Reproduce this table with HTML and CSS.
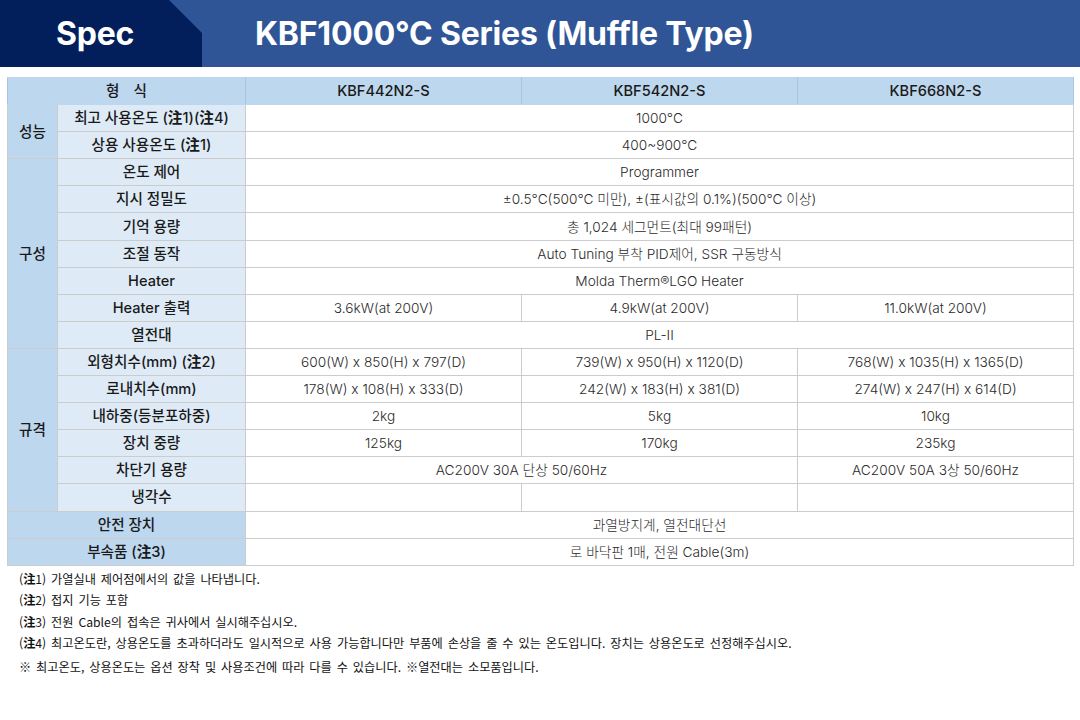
FILE: index.html
```html
<!DOCTYPE html>
<html lang="ko">
<head>
<meta charset="utf-8">
<link rel="stylesheet" href="styles.css">
</head>
<body>
<header class="topbar">
  <div class="tab"><span class="tab-text">Spec</span></div>
  <h1 class="title">KBF1000°C Series (Muffle Type)</h1>
</header>
<main class="content">
  <table class="spec">
    <colgroup>
      <col class="c-group"><col class="c-label"><col class="c-data"><col class="c-data"><col class="c-data">
    </colgroup>
    <tr class="head">
      <th colspan="2" class="h"><span class="spaced">형식</span></th>
      <th class="h">KBF442N2-S</th>
      <th class="h">KBF542N2-S</th>
      <th class="h">KBF668N2-S</th>
    </tr>
    <tr>
      <th rowspan="2" class="grp">성능</th>
      <th class="lbl">최고 사용온도 (<b>注</b>1)(<b>注</b>4)</th>
      <td colspan="3">1000°C</td>
    </tr>
    <tr>
      <th class="lbl">상용 사용온도 (<b>注</b>1)</th>
      <td colspan="3">400~900°C</td>
    </tr>
    <tr>
      <th rowspan="7" class="grp">구성</th>
      <th class="lbl">온도 제어</th>
      <td colspan="3">Programmer</td>
    </tr>
    <tr>
      <th class="lbl">지시 정밀도</th>
      <td colspan="3">±0.5°C(500°C 미만), ±(표시값의 0.1%)(500°C 이상)</td>
    </tr>
    <tr>
      <th class="lbl">기억 용량</th>
      <td colspan="3">총 1,024 세그먼트(최대 99패턴)</td>
    </tr>
    <tr>
      <th class="lbl">조절 동작</th>
      <td colspan="3">Auto Tuning 부착 PID제어, SSR 구동방식</td>
    </tr>
    <tr>
      <th class="lbl">Heater</th>
      <td colspan="3">Molda Therm®LGO Heater</td>
    </tr>
    <tr>
      <th class="lbl">Heater 출력</th>
      <td>3.6kW(at 200V)</td>
      <td>4.9kW(at 200V)</td>
      <td>11.0kW(at 200V)</td>
    </tr>
    <tr>
      <th class="lbl">열전대</th>
      <td colspan="3">PL-II</td>
    </tr>
    <tr>
      <th rowspan="6" class="grp">규격</th>
      <th class="lbl">외형치수(mm) (<b>注</b>2)</th>
      <td>600(W) x 850(H) x 797(D)</td>
      <td>739(W) x 950(H) x 1120(D)</td>
      <td>768(W) x 1035(H) x 1365(D)</td>
    </tr>
    <tr>
      <th class="lbl">로내치수(mm)</th>
      <td>178(W) x 108(H) x 333(D)</td>
      <td>242(W) x 183(H) x 381(D)</td>
      <td>274(W) x 247(H) x 614(D)</td>
    </tr>
    <tr>
      <th class="lbl">내하중(등분포하중)</th>
      <td>2kg</td>
      <td>5kg</td>
      <td>10kg</td>
    </tr>
    <tr>
      <th class="lbl">장치 중량</th>
      <td>125kg</td>
      <td>170kg</td>
      <td>235kg</td>
    </tr>
    <tr>
      <th class="lbl">차단기 용량</th>
      <td colspan="2">AC200V 30A 단상 50/60Hz</td>
      <td>AC200V 50A 3상 50/60Hz</td>
    </tr>
    <tr>
      <th class="lbl">냉각수</th>
      <td></td>
      <td></td>
      <td></td>
    </tr>
    <tr>
      <th colspan="2" class="grp">안전 장치</th>
      <td colspan="3">과열방지계, 열전대단선</td>
    </tr>
    <tr>
      <th colspan="2" class="grp">부속품 (<b>注</b>3)</th>
      <td colspan="3">로 바닥판 1매, 전원 Cable(3m)</td>
    </tr>
  </table>
  <ul class="notes">
    <li>(<b>注</b>1) 가열실내 제어점에서의 값을 나타냅니다.</li>
    <li>(<b>注</b>2) 접지 기능 포함</li>
    <li>(<b>注</b>3) 전원 Cable의 접속은 귀사에서 실시해주십시오.</li>
    <li>(<b>注</b>4) 최고온도란, 상용온도를 초과하더라도 일시적으로 사용 가능합니다만 부품에 손상을 줄 수 있는 온도입니다. 장치는 상용온도로 선정해주십시오.</li>
    <li class="last">※ 최고온도, 상용온도는 옵션 장착 및 사용조건에 따라 다를 수 있습니다. ※열전대는 소모품입니다.</li>
  </ul>
</main>
</body>
</html>
```

FILE: styles.css
```css
* { box-sizing: border-box; }
html, body { margin: 0; padding: 0; background: #ffffff; }
body {
  width: 1080px;
  height: 720px;
  overflow: hidden;
  font-family: "Inter", "Noto Sans CJK KR", sans-serif;
  color: #222;
}
.topbar {
  display: flex;
  align-items: center;
  height: 67px;
  background: #2f5596;
}
.tab {
  width: 202px;
  height: 67px;
  background: #021f5c;
  clip-path: polygon(0 0, 169px 0, 202px 33px, 202px 100%, 0 100%);
  display: flex;
  align-items: center;
  padding-left: 56px;
}
.tab-text {
  color: #fff;
  font-weight: 700;
  font-size: 32px;
  letter-spacing: -0.2px;
}
.title {
  margin: 0 0 0 53px;
  color: #fff;
  font-weight: 700;
  font-size: 32px;
  letter-spacing: -0.2px;
}
.content {
  padding: 10px 7px 0 7px;
}
.spec {
  width: 1066px;
  border-collapse: collapse;
  table-layout: fixed;
  border: 1px solid #c3c3c3;
}
.c-group { width: 50px; }
.c-label { width: 188px; }
.c-data { width: 276px; }
.spec tr { height: 27.1px; }
.spec th, .spec td {
  padding: 0;
  text-align: center;
  vertical-align: middle;
  border: 1px solid #cccccc;
  line-height: 16px;
  white-space: nowrap;
}
.spec td {
  font-size: 13.7px;
  font-weight: 300;
  color: #2a2a2a;
}
.spec th {
  font-size: 14.6px;
  font-weight: 500;
  color: #1a1a1a;
}
.spec th b { font-weight: 700; }
.spaced { letter-spacing: 14px; margin-right: -14px; }
.h { background: #bdd7ee; }
.head th { border-top-color: #bdd7ee; border-bottom-color: #bdd7ee; border-left: 1px solid #a9c5e2; border-right: 1px solid #a9c5e2; }
.grp { background: #bdd7ee; }
.lbl { background: #deebf7; }
.notes {
  list-style: none;
  margin: 3px 0 0 12px;
  padding: 0;
  font-family: "Noto Sans CJK KR", sans-serif;
  font-size: 12.2px;
  word-spacing: 1.5px;
  color: #111;
}
.notes li { height: 21.5px; line-height: 21.5px; }
.notes li b { font-weight: 700; }
.notes li.last { margin-top: 2px; }
```
